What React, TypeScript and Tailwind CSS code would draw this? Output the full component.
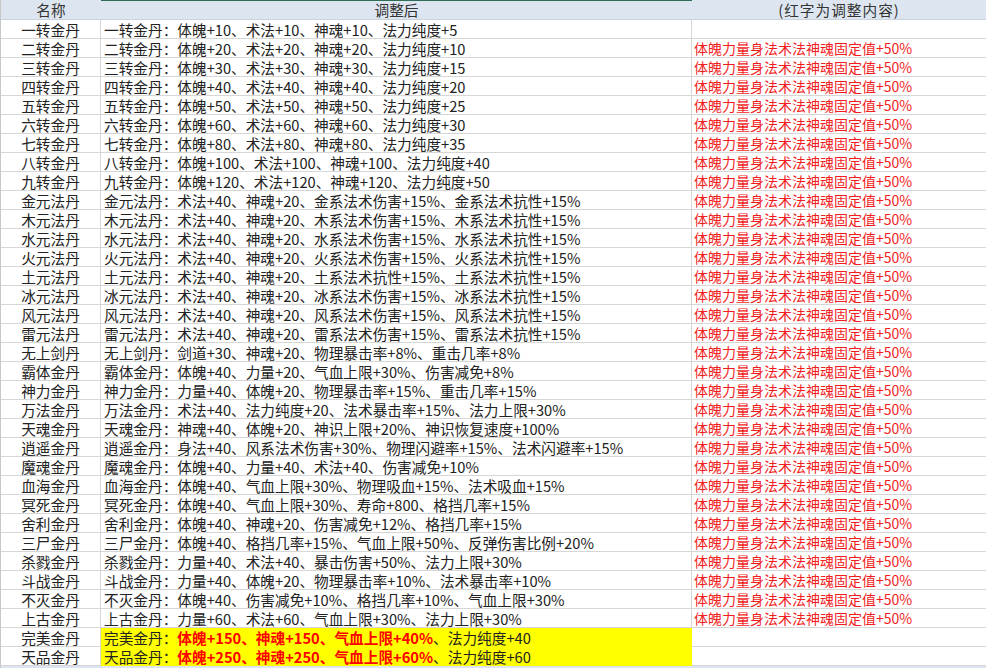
import React from "react";

const names = [
  "一转金丹","二转金丹","三转金丹","四转金丹","五转金丹","六转金丹","七转金丹","八转金丹","九转金丹",
  "金元法丹","木元法丹","水元法丹","火元法丹","土元法丹","冰元法丹","风元法丹","雷元法丹",
  "无上剑丹","霸体金丹","神力金丹","万法金丹","天魂金丹","逍遥金丹","魔魂金丹","血海金丹",
  "冥死金丹","舍利金丹","三尸金丹","杀戮金丹","斗战金丹","不灭金丹","上古金丹",
];

const effects = [
  "体魄+10、术法+10、神魂+10、法力纯度+5",
  "体魄+20、术法+20、神魂+20、法力纯度+10",
  "体魄+30、术法+30、神魂+30、法力纯度+15",
  "体魄+40、术法+40、神魂+40、法力纯度+20",
  "体魄+50、术法+50、神魂+50、法力纯度+25",
  "体魄+60、术法+60、神魂+60、法力纯度+30",
  "体魄+80、术法+80、神魂+80、法力纯度+35",
  "体魄+100、术法+100、神魂+100、法力纯度+40",
  "体魄+120、术法+120、神魂+120、法力纯度+50",
  "术法+40、神魂+20、金系法术伤害+15%、金系法术抗性+15%",
  "术法+40、神魂+20、木系法术伤害+15%、木系法术抗性+15%",
  "术法+40、神魂+20、水系法术伤害+15%、水系法术抗性+15%",
  "术法+40、神魂+20、火系法术伤害+15%、火系法术抗性+15%",
  "术法+40、神魂+20、土系法术抗性+15%、土系法术抗性+15%",
  "术法+40、神魂+20、冰系法术伤害+15%、冰系法术抗性+15%",
  "术法+40、神魂+20、风系法术伤害+15%、风系法术抗性+15%",
  "术法+40、神魂+20、雷系法术伤害+15%、雷系法术抗性+15%",
  "剑道+30、神魂+20、物理暴击率+8%、重击几率+8%",
  "体魄+40、力量+20、气血上限+30%、伤害减免+8%",
  "力量+40、体魄+20、物理暴击率+15%、重击几率+15%",
  "术法+40、法力纯度+20、法术暴击率+15%、法力上限+30%",
  "神魂+40、体魄+20、神识上限+20%、神识恢复速度+100%",
  "身法+40、风系法术伤害+30%、物理闪避率+15%、法术闪避率+15%",
  "体魄+40、力量+40、术法+40、伤害减免+10%",
  "体魄+40、气血上限+30%、物理吸血+15%、法术吸血+15%",
  "体魄+40、气血上限+30%、寿命+800、格挡几率+15%",
  "体魄+40、神魂+20、伤害减免+12%、格挡几率+15%",
  "体魄+40、格挡几率+15%、气血上限+50%、反弹伤害比例+20%",
  "力量+40、术法+40、暴击伤害+50%、法力上限+30%",
  "力量+40、体魄+20、物理暴击率+10%、法术暴击率+10%",
  "体魄+40、伤害减免+10%、格挡几率+10%、气血上限+30%",
  "力量+60、术法+60、气血上限+30%、法力上限+30%",
];

const special = [
  { name: "完美金丹", red: "体魄+150、神魂+150、气血上限+40%", rest: "、法力纯度+40" },
  { name: "天品金丹", red: "体魄+250、神魂+250、气血上限+60%", rest: "、法力纯度+60" },
];

const cellBase = "h-[19px] leading-[19px] border-b border-[#d6d6d6] whitespace-nowrap overflow-hidden";

export default function App() {
  return (
    <div
      className="w-[986px] h-[668px] overflow-hidden bg-white text-[14.67px] text-[#222] border-l border-[#c8c8c8]"
      style={{ fontFamily: '"Noto Sans CJK SC", "Noto Sans", sans-serif' }}
    >
      <div className="grid grid-cols-[100px_591px_1fr]">
        {/* header */}
        <div className="h-[20px] leading-[19px] bg-[#dde6f0] border-b border-[#c9d3de] text-center text-[#333]">名称</div>
        <div className="h-[20px] leading-[19px] bg-[#dde6f0] border-b border-[#c9d3de] text-center text-[#333] shadow-[inset_0_1px_0_#2e6e52]">调整后</div>
        <div className="h-[20px] leading-[19px] bg-[#dde6f0] border-b border-[#c9d3de] text-center text-[#333] tracking-[1px]">(红字为调整内容)</div>

        {names.map((n, i) => (
          <React.Fragment key={n}>
            <div className={`${cellBase} border-r text-center`}>{n}</div>
            <div className={`${cellBase} border-r pl-[3px]`}>{n}：{effects[i]}</div>
            <div className={`${cellBase} pl-[2px] text-[14px] text-[#f21d1d]`}>
              {i === 0 ? "" : "体魄力量身法术法神魂固定值+50%"}
            </div>
          </React.Fragment>
        ))}

        {special.map((s) => (
          <React.Fragment key={s.name}>
            <div className={`${cellBase} border-r text-center`}>{s.name}</div>
            <div className={`${cellBase} border-r border-r-[#ffff00] border-b-[#ffff00] bg-[#ffff00] pl-[3px]`}>
              {s.name}：<span className="font-bold text-[#ff0000]">{s.red}</span>
              {s.rest}
            </div>
            <div className={`${cellBase}`}></div>
          </React.Fragment>
        ))}
      </div>
      <div className="h-[2px] bg-[#dde6f0]" />
    </div>
  );
}
